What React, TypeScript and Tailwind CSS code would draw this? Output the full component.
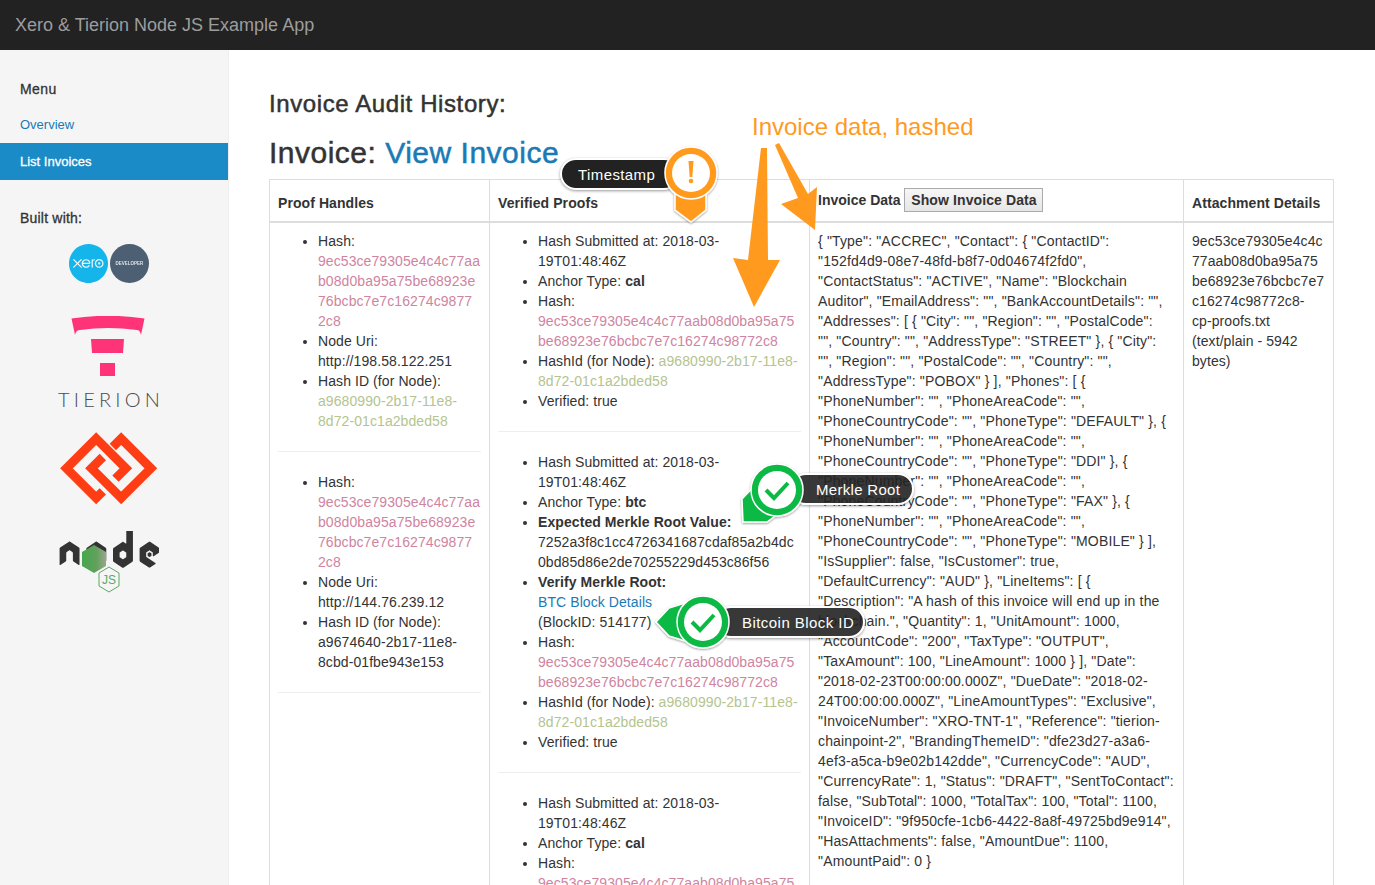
import { DiNodejs } from "react-icons/di";
import { SiXero } from "react-icons/si";

const HASH_NARROW = ["9ec53ce79305e4c4c77aa", "b08d0ba95a75be68923e", "76bcbc7e7c16274c9877", "2c8"];
const HASH_WIDE = ["9ec53ce79305e4c4c77aab08d0ba95a75", "be68923e76bcbc7e7c16274c98772c8"];
const NODE_HASH_ID = ["a9680990-2b17-11e8-", "8d72-01c1a2bded58"];

// line breaks as the page wrapped them
const INVOICE_LINES = [
  `{ "Type": "ACCREC", "Contact": { "ContactID":`,
  `"152fd4d9-08e7-48fd-b8f7-0d04674f2fd0",`,
  `"ContactStatus": "ACTIVE", "Name": "Blockchain`,
  `Auditor", "EmailAddress": "", "BankAccountDetails": "",`,
  `"Addresses": [ { "City": "", "Region": "", "PostalCode":`,
  `"", "Country": "", "AddressType": "STREET" }, { "City":`,
  `"", "Region": "", "PostalCode": "", "Country": "",`,
  `"AddressType": "POBOX" } ], "Phones": [ {`,
  `"PhoneNumber": "", "PhoneAreaCode": "",`,
  `"PhoneCountryCode": "", "PhoneType": "DEFAULT" }, {`,
  `"PhoneNumber": "", "PhoneAreaCode": "",`,
  `"PhoneCountryCode": "", "PhoneType": "DDI" }, {`,
  `"PhoneNumber": "", "PhoneAreaCode": "",`,
  `"PhoneCountryCode": "", "PhoneType": "FAX" }, {`,
  `"PhoneNumber": "", "PhoneAreaCode": "",`,
  `"PhoneCountryCode": "", "PhoneType": "MOBILE" } ],`,
  `"IsSupplier": false, "IsCustomer": true,`,
  `"DefaultCurrency": "AUD" }, "LineItems": [ {`,
  `"Description": "A hash of this invoice will end up in the`,
  `blockchain.", "Quantity": 1, "UnitAmount": 1000,`,
  `"AccountCode": "200", "TaxType": "OUTPUT",`,
  `"TaxAmount": 100, "LineAmount": 1000 } ], "Date":`,
  `"2018-02-23T00:00:00.000Z", "DueDate": "2018-02-`,
  `24T00:00:00.000Z", "LineAmountTypes": "Exclusive",`,
  `"InvoiceNumber": "XRO-TNT-1", "Reference": "tierion-`,
  `chainpoint-2", "BrandingThemeID": "dfe23d27-a3a6-`,
  `4ef3-a5ca-b9e02b142dde", "CurrencyCode": "AUD",`,
  `"CurrencyRate": 1, "Status": "DRAFT", "SentToContact":`,
  `false, "SubTotal": 1000, "TotalTax": 100, "Total": 1100,`,
  `"InvoiceID": "9f950cfe-1cb6-4422-8a8f-49725bd9e914",`,
  `"HasAttachments": false, "AmountDue": 1100,`,
  `"AmountPaid": 0 }`,
];

const ATTACHMENT_LINES = [
  "9ec53ce79305e4c4c",
  "77aab08d0ba95a75",
  "be68923e76bcbc7e7",
  "c16274c98772c8-",
  "cp-proofs.txt",
  "(text/plain - 5942",
  "bytes)",
];

function Lines({ lines, className }: { lines: string[]; className?: string }) {
  return (
    <>
      {lines.map((line, i) => (
        <span key={i} className={`block whitespace-nowrap ${className ?? ""}`}>
          {line}
        </span>
      ))}
    </>
  );
}

function Bullets({ children }: { children: React.ReactNode }) {
  return <ul className="list-disc pl-10">{children}</ul>;
}

function Divider() {
  return <hr className="my-5 border-t border-[#eeeeee]" />;
}

function ProofHandle({ uri, hashId, green }: { uri: string; hashId: string[]; green?: boolean }) {
  return (
    <Bullets>
      <li>
        Hash:
        <Lines lines={HASH_NARROW} className="text-[#cf84a0]" />
      </li>
      <li>
        Node Uri:
        <br />
        {uri}
      </li>
      <li>
        Hash ID (for Node):
        <Lines lines={hashId} className={green ? "text-[#b4c48e]" : ""} />
      </li>
    </Bullets>
  );
}

function HashItems() {
  return (
    <>
      <li>
        Hash:
        <Lines lines={HASH_WIDE} className="text-[#cf84a0]" />
      </li>
      <li>
        HashId (for Node): <span className="text-[#b4c48e]">{NODE_HASH_ID[0]}</span>
        <br />
        <span className="text-[#b4c48e]">{NODE_HASH_ID[1]}</span>
      </li>
      <li>Verified: true</li>
    </>
  );
}

function CalProof() {
  return (
    <Bullets>
      <li>Hash Submitted at: 2018-03-19T01:48:46Z</li>
      <li>
        Anchor Type: <b className="font-bold">cal</b>
      </li>
      <HashItems />
    </Bullets>
  );
}

function TierionLogo() {
  return (
    <div className="flex flex-col items-center">
      <svg viewBox="0 0 75 62" className="w-[75px] h-[62px]">
        <path d="M0.5 2.5 Q37 -3 73.5 2.5 L70 19 Q69 14 66 14 Q37 10 9 14 Q5 14 4 19 Z" fill="#ff3377" />
        <path d="M20 23 H53 L52 37 H21 Z" fill="#ff3377" />
        <rect x="29" y="47" width="15" height="13" fill="#ff3377" />
      </svg>
      <span className="mt-[9px] pl-[4px] text-[20px] leading-6 tracking-[4.2px] text-[#4a4a4a] font-['Lato',sans-serif] font-light">
        TIERION
      </span>
    </div>
  );
}

function ChainLogo() {
  return (
    <svg viewBox="80 25 320 240" className="w-[107px] h-[80px]">
      <g fill="none" stroke="#ff3d14" strokeWidth="27" strokeLinejoin="miter">
        <path d="M220 215 L200 235 L111 146 L200 57 L289 146 L258 177" />
        <path d="M220 112 L186 146 L275 235 L364 146 L275 57 L250 82" />
      </g>
    </svg>
  );
}

function NodeLogo() {
  return (
    <div className="relative w-[100px] h-[62px]">
      <div className="relative w-[100px] h-[46px] overflow-hidden">
        <DiNodejs className="absolute left-[-1px] top-[-50px] w-[130px] h-[130px] scale-y-[1.15] text-[#333]" />
      </div>
      <svg viewBox="0 0 100 62" className="absolute inset-0 w-[100px] h-[62px]">
        <defs>
          <linearGradient id="nodeHex" x1="0" x2="1" y1="0" y2="0">
            <stop offset="0" stopColor="#45a84c" />
            <stop offset="0.6" stopColor="#62a05e" />
            <stop offset="1" stopColor="#9aa58c" />
          </linearGradient>
        </defs>
        <path d="M35 14 L47 21 V35 L35 42 L23 35 V21 Z" fill="url(#nodeHex)" />
        <path d="M50 36 L60 42 V55 L50 61 L40 55 V42 Z" fill="#f5f5f5" stroke="#5da862" strokeWidth="1" />
        <text x="50" y="53" textAnchor="middle" fontSize="12" fill="#5da862" fontFamily="Liberation Sans">
          JS
        </text>
      </svg>
    </div>
  );
}

function Sidebar() {
  return (
    <aside className="w-[229px] shrink-0 bg-[#f5f5f5] border-r border-[#eeeeee] pt-[29px]">
      <h4 className="px-5 h-5 leading-5 font-medium text-[#333] tracking-[0.4px] [-webkit-text-stroke:0.3px_#333]">Menu</h4>
      <a className="block mt-[6px] px-5 pt-[10px] pb-[8px] text-[13px] leading-5 text-[#1a7ab5]">Overview</a>
      <a className="block w-[228px] px-5 py-[8.5px] text-[13px] leading-5 bg-[#1a8bc6] text-white font-medium [-webkit-text-stroke:0.3px_white]">
        List Invoices
      </a>
      <h4 className="mt-[28px] px-5 h-5 leading-5 font-medium text-[#333] tracking-[0.2px] [-webkit-text-stroke:0.3px_#333]">Built with:</h4>
      <div className="mt-[16px] flex flex-col items-center pr-[10px]">
        <div className="flex gap-[2px]">
          <SiXero className="w-[39px] h-[39px] text-[#13b5ea]" />
          <div className="w-[39px] h-[39px] rounded-full bg-[#4d5f72] flex items-center justify-center">
            <span className="text-[5px] leading-none font-bold text-[#dfe4e8] scale-90">DEVELOPER</span>
          </div>
        </div>
        <div className="mt-[33px]">
          <TierionLogo />
        </div>
        <div className="mt-[17px]">
          <ChainLogo />
        </div>
        <div className="mt-[23px]">
          <NodeLogo />
        </div>
      </div>
    </aside>
  );
}

function AuditTable() {
  return (
    <table className="table-fixed border-collapse w-[1064px] tracking-[0.08px]">
      <colgroup>
        <col className="w-[220px]" />
        <col className="w-[320px]" />
        <col className="w-[374px]" />
        <col className="w-[150px]" />
      </colgroup>
      <thead>
        <tr className="h-[42px]">
          <th className="border border-[#ddd] border-b-2 p-2 text-left align-bottom font-bold">Proof Handles</th>
          <th className="border border-[#ddd] border-b-2 p-2 text-left align-bottom font-bold">Verified Proofs</th>
          <th className="border border-[#ddd] border-b-2 p-2 text-left align-top font-bold tracking-normal">
            <div className="flex items-center gap-1">
              Invoice Data
              <button className="h-6 w-[139px] border border-[#aaa] bg-gradient-to-b from-[#f6f6f6] to-[#e6e6e6] font-bold tracking-[0.1px]">
                Show Invoice Data
              </button>
            </div>
          </th>
          <th className="border border-[#ddd] border-b-2 p-2 text-left align-bottom font-bold">Attachment Details</th>
        </tr>
      </thead>
      <tbody>
        <tr>
          <td className="border border-[#ddd] p-2 align-top">
            <ProofHandle uri="http://198.58.122.251" hashId={NODE_HASH_ID} green />
            <Divider />
            <ProofHandle uri="http://144.76.239.12" hashId={["a9674640-2b17-11e8-", "8cbd-01fbe943e153"]} />
            <Divider />
          </td>
          <td className="border border-[#ddd] p-2 align-top">
            <CalProof />
            <Divider />
            <Bullets>
              <li>Hash Submitted at: 2018-03-19T01:48:46Z</li>
              <li>
                Anchor Type: <b className="font-bold">btc</b>
              </li>
              <li>
                <b className="font-bold">Expected Merkle Root Value:</b>
                <Lines lines={["7252a3f8c1cc4726341687cdaf85a2b4dc", "0bd85d86e2de70255229d453c86f56"]} />
              </li>
              <li>
                <b className="font-bold">Verify Merkle Root:</b>
                <br />
                <a className="text-[#1a7ab5]">BTC Block Details</a>
                <br />
                (BlockID: 514177)
              </li>
              <HashItems />
            </Bullets>
            <Divider />
            <CalProof />
          </td>
          <td className="border border-[#ddd] p-2 align-top tracking-[0.16px]">
            <Lines lines={INVOICE_LINES} />
          </td>
          <td className="border border-[#ddd] p-2 align-top">
            <Lines lines={ATTACHMENT_LINES} />
          </td>
        </tr>
      </tbody>
    </table>
  );
}

// callouts drawn on top of the screenshot
function Annotations() {
  return (
    <>
      <span className="absolute left-[752px] top-[112px] text-[24px] leading-[30px] text-[#ff9a1f]">
        Invoice data, hashed
      </span>
      <div className="absolute left-[560px] top-[158px] w-[120px] h-[32px] rounded-full bg-[#222] border-2 border-white shadow-[0_1px_3px_rgba(0,0,0,0.4)] pl-[16px] text-[15px] tracking-[0.4px] leading-[29px] text-white">
        Timestamp
      </div>
      <div className="absolute left-[790px] top-[473px] w-[124px] h-[32px] rounded-full bg-[#222]/90 border-2 border-white shadow-[0_1px_3px_rgba(0,0,0,0.4)] pl-[24px] text-[15px] tracking-[0.3px] leading-[29px] text-white">
        Merkle Root
      </div>
      <div className="absolute left-[715px] top-[606px] w-[150px] h-[32px] rounded-full bg-[#222]/90 border-2 border-white shadow-[0_1px_3px_rgba(0,0,0,0.4)] pl-[25px] text-[15px] tracking-[0.45px] leading-[29px] text-white">
        Bitcoin Block ID
      </div>
      <svg viewBox="0 0 1375 885" className="absolute inset-0 w-[1375px] h-[885px] pointer-events-none">
        <defs>
          <filter id="pinShadow" x="-20%" y="-20%" width="140%" height="140%">
            <feDropShadow dx="0" dy="1" stdDeviation="1.2" floodOpacity="0.4" />
          </filter>
        </defs>
        <g fill="#ff9a1f">
          <path d="M761 148 L767 148 L768 260 L780 260 L754 307 L733 258 L748 260 Z" />
          <path d="M775 145 L779 143 L808 194 L817 187 L815 230 L781 204 L798 198 Z" />
        </g>
        <g filter="url(#pinShadow)">
          <path d="M675 190 V210 L691 222 L706 210 V190 Z" fill="#ff9a1f" stroke="#fff" strokeWidth="1.5" />
          <circle cx="691" cy="173" r="26" fill="#ff9a1f" stroke="#fff" strokeWidth="1.5" />
          <circle cx="691" cy="173" r="19" fill="#fff" />
          <path d="M688.5 161 H693.5 L692.3 177 H689.7 Z" fill="#ff9a1f" />
          <circle cx="691" cy="181" r="2.3" fill="#ff9a1f" />
        </g>
        <g filter="url(#pinShadow)">
          <path d="M742 499 L743 522 L767 522 L790 505 L760 480 Z" fill="#0cb944" stroke="#fff" strokeWidth="1.5" />
          <circle cx="777" cy="490" r="26" fill="#0cb944" stroke="#fff" strokeWidth="1.5" />
          <circle cx="777" cy="490" r="19" fill="#fff" />
          <path d="M766 490 L774 498 L788 483" fill="none" stroke="#0cb944" strokeWidth="4" />
        </g>
        <g filter="url(#pinShadow)">
          <path d="M656 622 L669 608 L695 600 L695 644 L669 636 Z" fill="#0cb944" stroke="#fff" strokeWidth="1.5" />
          <circle cx="703" cy="622" r="26" fill="#0cb944" stroke="#fff" strokeWidth="1.5" />
          <circle cx="703" cy="622" r="19" fill="#fff" />
          <path d="M692 622 L700 630 L714 615" fill="none" stroke="#0cb944" strokeWidth="4" />
        </g>
      </svg>
    </>
  );
}

export default function App() {
  return (
    <div className="relative h-[885px] overflow-hidden bg-white text-[14px] leading-5 text-[#333] font-['Liberation_Sans',Arial,sans-serif]">
      <header className="h-[50px] bg-[#222] px-[15px] text-[18px] leading-[50px] text-[#9d9d9d]">
        Xero &amp; Tierion Node JS Example App
      </header>
      <div className="flex h-[835px]">
        <Sidebar />
        <main className="flex-1 pl-10">
          <h2 className="mt-[41px] text-[24px] leading-[26px] font-medium tracking-[0.6px] [-webkit-text-stroke:0.5px_#333]">
            Invoice Audit History:
          </h2>
          <h2 className="mt-[19px] mb-[10px] text-[30px] leading-[33px] font-medium tracking-[0.5px] [-webkit-text-stroke:0.5px_#333]">
            Invoice: <a className="text-[#1a7ab5] [-webkit-text-stroke:0.5px_#1a7ab5]">View Invoice</a>
          </h2>
          <AuditTable />
        </main>
      </div>
      <Annotations />
    </div>
  );
}
